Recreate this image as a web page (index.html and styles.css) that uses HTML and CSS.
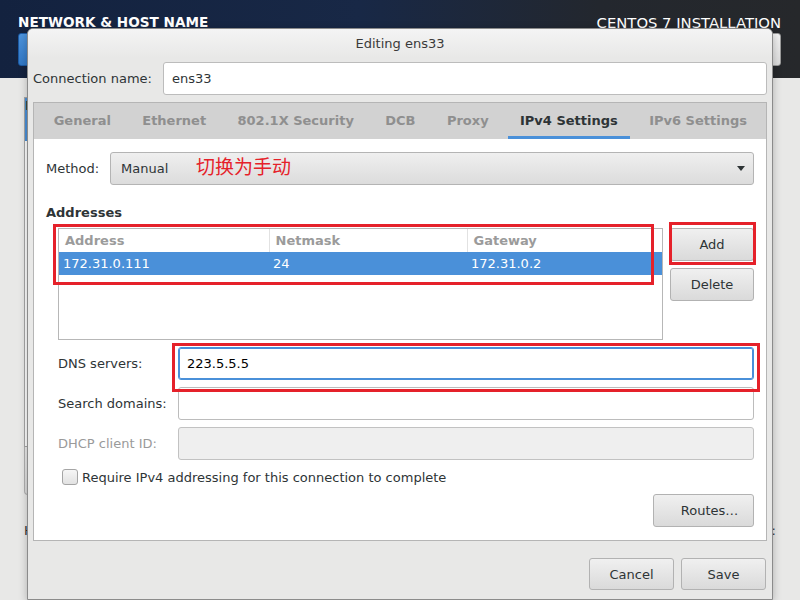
FILE: index.html
```html
<!DOCTYPE html>
<html lang="en">
<head>
    <meta charset="UTF-8">
    <meta name="viewport" content="width=device-width, initial-scale=1.0">
    <title>Editing ens33</title>
    <link rel="stylesheet" href="styles.css">
</head>
<body>
    <!-- installer hub header -->
    <header class="hub">
        <div class="hub-left">
            <h1>NETWORK &amp; HOST NAME</h1>
            <button class="done">Done</button>
        </div>
        <div class="hub-right">
            <div class="product">CENTOS 7 INSTALLATION</div>
            <button class="layout">us</button>
        </div>
    </header>

    <!-- spoke page behind the dialog -->
    <main class="spoke">
        <div class="device-list">
            <div class="device selected">Ethernet (ens33)</div>
        </div>
        <div class="device-tools"></div>
        <div class="hostname-row">
            <span>Host name:</span>
            <span>Current host name:</span>
        </div>
    </main>

    <!-- connection editor dialog -->
    <div class="dialog">
        <div class="titlebar">Editing ens33</div>

        <div class="conn-row">
            <label for="connName">Connection name:</label>
            <input type="text" id="connName" value="ens33">
        </div>

        <div class="notebook">
            <div class="tabs">
                <span class="tab">General</span>
                <span class="tab">Ethernet</span>
                <span class="tab">802.1X Security</span>
                <span class="tab">DCB</span>
                <span class="tab">Proxy</span>
                <span class="tab active">IPv4 Settings</span>
                <span class="tab">IPv6 Settings</span>
            </div>

            <div class="tab-page">
                <div class="method-row">
                    <span class="method-label">Method:</span>
                    <div class="combo">
                        <span>Manual</span>
                        <span class="arrow"></span>
                    </div>
                </div>

                <h2>Addresses</h2>
                <div class="addresses">
                    <div class="addr-table">
                        <table>
                            <colgroup>
                                <col class="col-addr">
                                <col class="col-mask">
                                <col>
                            </colgroup>
                            <thead>
                                <tr>
                                    <th>Address</th>
                                    <th>Netmask</th>
                                    <th>Gateway</th>
                                </tr>
                            </thead>
                            <tbody>
                                <tr class="selected-row">
                                    <td>172.31.0.111</td>
                                    <td>24</td>
                                    <td>172.31.0.2</td>
                                </tr>
                            </tbody>
                        </table>
                    </div>
                    <div class="addr-buttons">
                        <button class="btn">Add</button>
                        <button class="btn">Delete</button>
                    </div>
                </div>

                <div class="form-grid">
                    <label for="dns">DNS servers:</label>
                    <input type="text" id="dns" class="focused" value="223.5.5.5">
                    <label for="search">Search domains:</label>
                    <input type="text" id="search">
                    <label for="dhcp" class="disabled">DHCP client ID:</label>
                    <input type="text" id="dhcp" disabled>
                </div>

                <div class="check">
                    <span class="box"></span>
                    <span>Require IPv4 addressing for this connection to complete</span>
                </div>

                <div class="routes-row">
                    <button class="btn routes">Routes…</button>
                </div>
            </div>
        </div>

        <div class="dialog-buttons">
            <button class="btn wide">Cancel</button>
            <button class="btn wide">Save</button>
        </div>
    </div>

    <!-- red annotations drawn over the screenshot -->
    <span class="note-text">切换为手动</span>
    <div class="note-box box-table"></div>
    <div class="note-box box-add"></div>
    <div class="note-box box-dns"></div>
</body>
</html>
```
FILE: styles.css
```css
* {
    margin: 0;
    padding: 0;
    box-sizing: border-box;
}

body {
    width: 800px;
    height: 600px;
    overflow: hidden;
    position: relative;
    background-color: #e8e8e7;
    font-family: "DejaVu Sans", "Noto Sans CJK SC", sans-serif;
    font-size: 13px;
    color: #2e3436;
}

button, input {
    font-family: inherit;
    font-size: 13px;
    color: #2e3436;
    outline: none;
}

/* header */
.hub {
    height: 78px;
    display: flex;
    justify-content: space-between;
    padding: 14px 19px 0 18px;
    background: linear-gradient(90deg, #13223f 0%, #182846 45%, #23272e 75%, #26282b 100%);
    color: #fff;
}

.hub h1 {
    font-size: 13.6px;
    line-height: 17px;
    font-weight: bold;
}

.done {
    display: block;
    margin-top: 2px;
    width: 80px;
    height: 33px;
    border: 1px solid #1c5aa3;
    border-radius: 3px;
    background: linear-gradient(#4d94dd, #3178c6);
    color: #fff;
    font-weight: bold;
}

.hub-right {
    display: flex;
    flex-direction: column;
    align-items: flex-end;
}

.product {
    font-size: 14.8px;
    line-height: 17px;
}

.layout {
    margin-top: 2px;
    width: 80px;
    height: 33px;
    border: 1px solid #9a9a9a;
    border-radius: 3px;
    background: linear-gradient(#f2f2f2, #dcdcdc);
}

/* page behind */
.spoke {
    padding: 19px 24px 0 24px;
}

.device-list {
    width: 330px;
    height: 350px;
    border: 1px solid #a6a6a6;
    background-color: #fff;
}

.device.selected {
    height: 43px;
    background-color: #4a90d9;
}

.device-tools {
    width: 60px;
    height: 48px;
    border: 1px solid #b0b0b0;
    border-top: none;
    border-radius: 0 0 4px 4px;
    background: linear-gradient(#ececec, #dcdcdc);
}

.hostname-row {
    display: flex;
    justify-content: space-between;
    margin-top: 28px;
    line-height: 16px;
}

/* dialog */
.dialog {
    position: absolute;
    left: 27px;
    top: 28px;
    width: 746px;
    height: 572px;
    border: 1px solid #8b8b8b;
    border-radius: 6px 6px 0 0;
    background-color: #e8e8e7;
    box-shadow: 0 2px 8px rgba(0, 0, 0, 0.25);
}

.titlebar {
    height: 29px;
    line-height: 29px;
    text-align: center;
    color: #3a3a3a;
    background: linear-gradient(#f4f4f4, #e8e8e7);
    border-radius: 5px 5px 0 0;
}

.conn-row {
    display: flex;
    align-items: center;
    padding: 4px 5px 0;
}

.conn-row label {
    width: 130px;
}

input {
    height: 33px;
    border: 1px solid #bcbcbc;
    border-radius: 3px;
    padding: 0 8px;
    background-color: #fff;
}

.conn-row input {
    flex: 1;
}

.notebook {
    margin: 7px 5px 0;
    height: 439px;
    border: 1px solid #b5b5b5;
    background-color: #fff;
}

.tabs {
    height: 36px;
    display: flex;
    padding-left: 4px;
    background-color: #d2d2d2;
    overflow: hidden;
}

.tab {
    flex-shrink: 0;
    white-space: nowrap;
    padding: 0 12px;
    margin: 0 3.7px;
    line-height: 36px;
    font-weight: bold;
    color: #8f8f8f;
}

.tab.active {
    color: #2e3436;
    box-shadow: inset 0 -3px 0 #4a90d9;
}

.tab-page {
    padding: 13px 12px 0;
}

.method-row {
    display: flex;
    align-items: center;
    height: 33px;
}

.method-label {
    width: 64px;
}

.combo {
    flex: 1;
    height: 33px;
    display: flex;
    align-items: center;
    padding: 0 8px 0 10px;
    border: 1px solid #b4b4b4;
    border-radius: 3px;
    background: linear-gradient(#efefef, #dcdcdc);
}

.arrow {
    margin-left: auto;
    border-left: 4px solid transparent;
    border-right: 4px solid transparent;
    border-top: 5px solid #2e3436;
}

h2 {
    font-size: 13px;
    font-weight: bold;
    line-height: 16px;
    margin-top: 20px;
}

.addresses {
    display: flex;
    gap: 7px;
    padding-left: 12px;
    margin-top: 7px;
}

.addr-table {
    width: 605px;
    height: 112px;
    border: 1px solid #b7b7b7;
    background-color: #fff;
}

table {
    width: 100%;
    border-collapse: collapse;
    table-layout: fixed;
}

.col-addr {
    width: 210px;
}

.col-mask {
    width: 198px;
}

th {
    height: 23px;
    padding-left: 6px;
    text-align: left;
    font-weight: bold;
    color: #9b9b9b;
    border-left: 1px solid #e2e2e2;
}

th:first-child {
    border-left: none;
}

.selected-row td {
    height: 23px;
    padding-left: 4px;
    color: #fff;
    background-color: #4a90d9;
}

.addr-buttons {
    display: flex;
    flex-direction: column;
    gap: 7px;
    width: 84px;
}

.btn {
    height: 33px;
    border: 1px solid #b2b2b2;
    border-radius: 3px;
    background: linear-gradient(#f0f0f0, #dadada);
}

.form-grid {
    display: grid;
    grid-template-columns: 120px 1fr;
    row-gap: 7px;
    align-items: center;
    padding-left: 12px;
    margin-top: 7px;
}

.form-grid .focused {
    border-color: #4a90d9;
    box-shadow: inset 0 0 0 1px #4a90d9;
    color: #000;
}

.form-grid .disabled {
    color: #9a9a9a;
}

input:disabled {
    background-color: #efefef;
    border-color: #c2c2c2;
}

.check {
    display: flex;
    align-items: center;
    gap: 4px;
    height: 16px;
    margin: 9px 0 0 16px;
}

.box {
    width: 16px;
    height: 16px;
    border: 1px solid #a5a5a5;
    border-radius: 3px;
    background: linear-gradient(#f6f6f6, #e2e2e2);
}

.routes-row {
    display: flex;
    justify-content: flex-end;
    margin-top: 9px;
}

.routes {
    width: 101px;
    padding-left: 12px;
}

.dialog-buttons {
    display: flex;
    justify-content: flex-end;
    gap: 7px;
    padding: 17px 6px 0;
}

.btn.wide {
    width: 85px;
    height: 32px;
}

/* annotations */
.note-text {
    position: absolute;
    left: 196px;
    top: 156px;
    font-family: "Noto Sans CJK SC", sans-serif;
    font-size: 19px;
    line-height: 1;
    color: #e5212a;
}

.note-box {
    position: absolute;
    border: 3px solid #e5212a;
}

.box-table {
    left: 53px;
    top: 224px;
    width: 601px;
    height: 61px;
}

.box-add {
    left: 669px;
    top: 222px;
    width: 87px;
    height: 43px;
}

.box-dns {
    left: 172px;
    top: 343px;
    width: 588px;
    height: 49px;
}
```
